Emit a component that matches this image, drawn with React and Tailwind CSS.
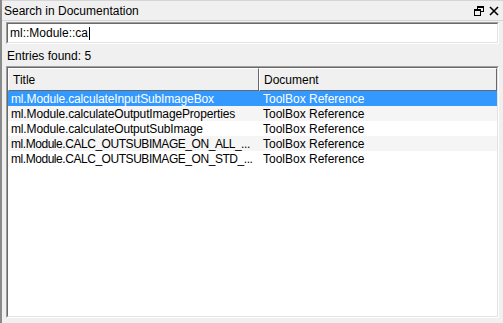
import { useState } from "react";

const rows = [
  { title: "ml.Module.calculateInputSubImageBox", doc: "ToolBox Reference" },
  { title: "ml.Module.calculateOutputImageProperties", doc: "ToolBox Reference" },
  { title: "ml.Module.calculateOutputSubImage", doc: "ToolBox Reference" },
  { title: "ml.Module.CALC_OUTSUBIMAGE_ON_ALL_...", doc: "ToolBox Reference", tight: true },
  { title: "ml.Module.CALC_OUTSUBIMAGE_ON_STD_...", doc: "ToolBox Reference", tight: true },
];

export default function App() {
  const [selected, setSelected] = useState(0);

  return (
    <div className="w-[503px] h-[323px] bg-[#f0f0f0] border-l-2 border-[#8a8a8a] flex flex-col text-[12px] text-black font-['Liberation_Sans',sans-serif] overflow-hidden">
      {/* Title bar */}
      <div className="h-[21px] shrink-0 border-t border-b border-[#d6d6d6] flex items-center pl-[2px] pr-[4px]">
        <span className="flex-1">Search in Documentation</span>
        <svg width="10" height="10" viewBox="0 0 10 10" className="mr-[5px]" shapeRendering="crispEdges">
          <rect x="3.5" y="0.5" width="6" height="5" fill="none" stroke="#000" />
          <rect x="3.5" y="0.5" width="6" height="1.5" fill="#000" />
          <rect x="0.5" y="3.5" width="6" height="6" fill="#f0f0f0" stroke="#000" />
          <rect x="0.5" y="3.5" width="6" height="1.5" fill="#000" />
        </svg>
        <svg width="10" height="10" viewBox="0 0 10 10">
          <path d="M1 1 L9 9 M9 1 L1 9" stroke="#000" strokeWidth="1.6" />
        </svg>
      </div>

      <div className="flex flex-col flex-1 px-[4px] pt-[1px] pb-[5px]">
        {/* Search input */}
        <div className="h-[22px] border border-t-[#a0a0a0] border-l-[#a0a0a0] border-r-white border-b-white">
          <div className="h-full border border-t-[#696969] border-l-[#696969] border-r-[#e3e3e3] border-b-[#e3e3e3] bg-white flex items-center pl-[2px]">
            <span>ml::Module::ca</span>
            <span className="w-px h-[13px] bg-black ml-px" />
          </div>
        </div>

        <div className="h-[22px] flex items-center pl-px pt-[2px]">Entries found: 5</div>

        {/* Result table */}
        <div className="flex-1 border border-t-[#a0a0a0] border-l-[#a0a0a0] border-r-white border-b-white">
          <div className="h-full border border-t-[#696969] border-l-[#696969] border-r-[#e3e3e3] border-b-[#e3e3e3] bg-white flex flex-col">
            <div className="h-[23px] flex shrink-0">
              <div className="w-[251px] border border-t-white border-l-white border-r-[#696969] border-b-[#696969] bg-[#f0f0f0] flex items-center pl-[4px]">
                Title
              </div>
              <div className="flex-1 border border-t-white border-l-white border-r-[#696969] border-b-[#696969] bg-[#f0f0f0] flex items-center pl-[4px]">
                Document
              </div>
            </div>
            {rows.map((row, i) => (
              <div
                key={row.title}
                onClick={() => setSelected(i)}
                className={`h-[15px] flex items-center ${
                  i === selected
                    ? "bg-[#3399ff] text-white"
                    : i % 2 === 1
                    ? "bg-[#f5f5f5]"
                    : "bg-white"
                }`}
              >
                <div
                  className={`w-[251px] shrink-0 pl-[3px] whitespace-nowrap ${
                    row.tight ? "tracking-[-0.45px]" : "tracking-[-0.15px]"
                  }`}
                >
                  {row.title}
                </div>
                <div className="flex-1 pl-[4px] whitespace-nowrap">{row.doc}</div>
              </div>
            ))}
          </div>
        </div>
      </div>
    </div>
  );
}
